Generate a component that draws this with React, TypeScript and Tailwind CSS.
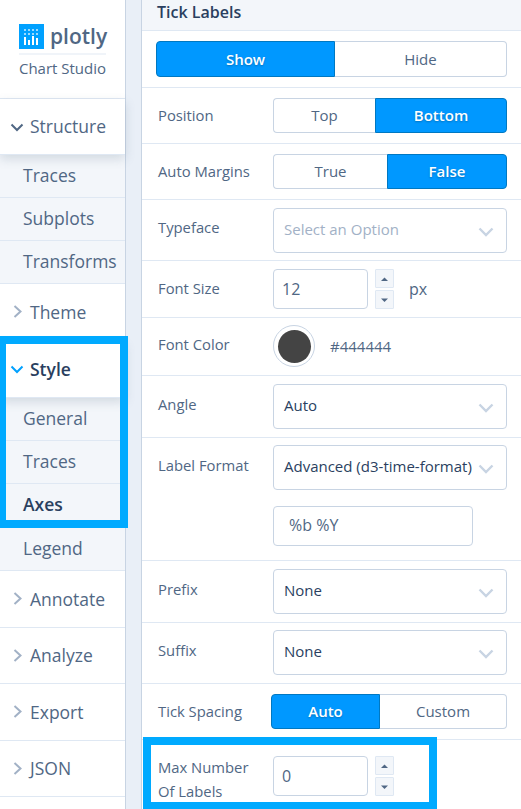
import { ReactNode } from "react";

const font = { fontFamily: '"Open Sans", sans-serif' };

function Chevron({ open, active }: { open?: boolean; active?: boolean }) {
  const color = active ? "#00a1ff" : open ? "#506784" : "#a2b1c6";
  return (
    <svg width="14" height="14" viewBox="0 0 14 14" fill="none" className="shrink-0">
      {open ? (
        <path d="M1.5 4.5 L7 10 L12.5 4.5" stroke={color} strokeWidth="2" />
      ) : (
        <path d="M4.5 1 L10.5 6.5 L4.5 12" stroke={color} strokeWidth="2" />
      )}
    </svg>
  );
}

function SectionHead({ label, h, open, active, shadow }: { label: string; h: string; open?: boolean; active?: boolean; shadow?: boolean }) {
  return (
    <div
      className={`flex items-center gap-[6px] border-b border-[#dfe8f3] bg-white pl-[10px] text-[17.5px] ${h} ${
        shadow ? "relative z-10 shadow-[0_4px_10px_rgba(80,103,132,0.2)]" : ""
      } ${active ? "font-semibold text-[#2a3f5f]" : "text-[#506784]"}`}
    >
      <Chevron open={open} active={active} />
      <span>{label}</span>
    </div>
  );
}

function SubItem({ label, active, h }: { label: string; active?: boolean; h?: string }) {
  return (
    <div
      className={`flex items-center border-b border-[#dfe8f3] bg-[#f3f6fa] pb-[1px] pl-[23px] text-[17.5px] ${h ?? "h-[43px]"} ${
        active ? "font-semibold text-[#2a3f5f]" : "text-[#506784]"
      }`}
    >
      {label}
    </div>
  );
}

function Logo() {
  return (
    <div className="flex h-[99px] flex-col items-center border-b border-[#dfe8f3] bg-white pt-[24px]">
      <div className="flex w-[87px] items-center gap-[6px] border-b-2 border-[#f0f4f9] pb-[4px]">
        <svg width="25" height="25" viewBox="0 0 25 25" className="shrink-0">
          <rect width="25" height="25" fill="#00a1ff" />
          <g fill="#ffffff">
            <rect x="5" y="13" width="2" height="8" />
            <rect x="9" y="16" width="2" height="5" />
            <rect x="13" y="12" width="2" height="9" />
            <rect x="17" y="14" width="2" height="7" />
            <rect x="5" y="5" width="2" height="2" opacity="0.6" />
            <rect x="9" y="5" width="2" height="2" opacity="0.6" />
            <rect x="13" y="5" width="2" height="2" opacity="0.6" />
            <rect x="17" y="5" width="2" height="2" opacity="0.6" />
            <rect x="5" y="9" width="2" height="2" opacity="0.6" />
            <rect x="9" y="9" width="2" height="2" opacity="0.6" />
            <rect x="13" y="9" width="2" height="2" opacity="0.6" />
            <rect x="17" y="9" width="2" height="2" opacity="0.6" />
          </g>
        </svg>
        <span className="text-[21px] font-semibold leading-[25px] text-[#506784]">plotly</span>
      </div>
      <div className="mt-[2px] text-[15px] text-[#506784]">Chart Studio</div>
    </div>
  );
}

function Row({ label, children, className, labelTop }: { label: ReactNode; children: ReactNode; className: string; labelTop: string }) {
  return (
    <div className={`flex border-b border-[#dfe8f3] pl-[16px] ${className}`}>
      <div className={`w-[115px] shrink-0 text-[14.8px] leading-[24px] text-[#506784] ${labelTop}`}>{label}</div>
      <div className="min-w-0 flex-1">{children}</div>
    </div>
  );
}

function Toggle({ left, right, on, leftW, className }: { left: string; right: string; on: "left" | "right"; leftW: string; className?: string }) {
  const onCls = "border-[#0078c2] bg-[#0098ff] font-semibold text-white [text-shadow:0_1px_2px_rgba(0,0,0,0.25)]";
  const offCls = "border-[#c8d4e3] bg-white text-[#506784]";
  return (
    <div className={`flex text-[15px] ${className ?? "h-[35px]"}`}>
      <div
        className={`flex items-center justify-center rounded-l-[4px] border ${leftW} ${on === "left" ? onCls + " " : offCls + " border-r-0"}`}
      >
        {left}
      </div>
      <div
        className={`flex flex-1 items-center justify-center rounded-r-[4px] border ${on === "right" ? onCls : offCls + " border-l-0"}`}
      >
        {right}
      </div>
    </div>
  );
}

function Dropdown({ value, placeholder }: { value: string; placeholder?: boolean }) {
  return (
    <div className="flex h-[45px] w-[234px] items-center justify-between rounded-[4px] border border-[#c8d4e3] bg-white pl-[10px] pr-[12px]">
      <span className={`whitespace-nowrap pb-[2px] text-[15px] ${placeholder ? "text-[#a2b1c6]" : "text-[#2a3f5f]"}`}>{value}</span>
      <svg width="16" height="10" viewBox="0 0 16 10" fill="none" className="-ml-[4px] mt-[2px] shrink-0">
        <path d="M1.5 1.5 L8 8 L14.5 1.5" stroke="#c8d4e3" strokeWidth="2.4" />
      </svg>
    </div>
  );
}

function Stepper() {
  return (
    <div className="flex flex-col gap-[2px]">
      {["M3 7 L6.5 3.5 L10 7 Z", "M3 3.5 L10 3.5 L6.5 7 Z"].map((d) => (
        <div key={d} className="flex h-[19px] w-[19px] items-center justify-center rounded-[1px] border border-[#dfe8f3] bg-[#f3f6fa]">
          <svg width="13" height="10" viewBox="0 0 13 10">
            <path d={d} fill="#506784" />
          </svg>
        </div>
      ))}
    </div>
  );
}

function NumberInput({ value, unit }: { value: string; unit?: string }) {
  return (
    <div className="flex items-center">
      <div className="flex h-[40px] w-[95px] items-center rounded-[4px] border border-[#c8d4e3] bg-white pl-[8px] text-[16px] text-[#506784]">
        {value}
      </div>
      <div className="ml-[7px]">
        <Stepper />
      </div>
      {unit && <span className="ml-[15px] text-[16px] text-[#506784]">{unit}</span>}
    </div>
  );
}

export default function App() {
  return (
    <div className="relative flex h-[809px] w-[521px] overflow-hidden bg-white" style={font}>
      <div className="w-[126px] shrink-0 border-r border-[#c8d4e3] bg-white">
        <Logo />
        <SectionHead label="Structure" h="h-[56px]" open shadow />
        <SubItem label="Traces" />
        <SubItem label="Subplots" />
        <SubItem label="Transforms" />
        <SectionHead label="Theme" h="h-[57px]" />
        <SectionHead label="Style" h="h-[57px]" open active shadow />
        <SubItem label="General" />
        <SubItem label="Traces" />
        <SubItem label="Axes" active />
        <SubItem label="Legend" h="h-[44px]" />
        <SectionHead label="Annotate" h="h-[57px]" />
        <SectionHead label="Analyze" h="h-[56px]" />
        <SectionHead label="Export" h="h-[57px]" />
        <SectionHead label="JSON" h="h-[56px]" />
      </div>
      <div className="w-[16px] shrink-0 border-r border-[#c8d4e3] bg-[#e9eff7]" />
      <div className="min-w-0 flex-1">
        <div className="h-[31px] border-b border-[#dfe8f3] bg-[#f3f6fa] pl-[15px] text-[16px] font-semibold leading-[24px] text-[#2a3f5f]">
          Tick Labels
        </div>
        <div className="h-[57px] border-b border-[#dfe8f3] px-[14px] pt-[10px]">
          <Toggle left="Show" right="Hide" on="left" leftW="w-[179px]" className="h-[36px]" />
        </div>
        <Row label="Position" className="h-[56px] pt-[10px]" labelTop="mt-[5px]">
          <div className="w-[234px]">
            <Toggle left="Top" right="Bottom" on="right" leftW="w-[102px]" />
          </div>
        </Row>
        <Row label="Auto Margins" className="h-[56px] pt-[10px]" labelTop="mt-[5px]">
          <div className="w-[234px]">
            <Toggle left="True" right="False" on="right" leftW="w-[114px]" />
          </div>
        </Row>
        <Row label="Typeface" className="h-[61px] pt-[8px]" labelTop="mt-[7px]">
          <Dropdown value="Select an Option" placeholder />
        </Row>
        <Row label="Font Size" className="h-[57px] pt-[8px]" labelTop="mt-[7px]">
          <NumberInput value="12" unit="px" />
        </Row>
        <Row label="Font Color" className="h-[58px] pt-[7px]" labelTop="mt-[7px]">
          <div className="flex items-center gap-[15px]">
            <div className="flex h-[42px] w-[42px] items-center justify-center rounded-full border border-[#c8d4e3] bg-white">
              <div className="h-[33px] w-[33px] rounded-full bg-[#444444]" />
            </div>
            <span className="text-[15px] text-[#506784]">#444444</span>
          </div>
        </Row>
        <Row label="Angle" className="h-[62px] pt-[8px]" labelTop="mt-[8px]">
          <Dropdown value="Auto" />
        </Row>
        <Row label="Label Format" className="h-[123px] pt-[7px]" labelTop="mt-[8px]">
          <Dropdown value="Advanced (d3-time-format)" />
          <div className="mt-[16px] flex h-[40px] w-[200px] items-center rounded-[4px] border border-[#c8d4e3] pb-[2px] pl-[15px] text-[16px] text-[#506784]">
            %b %Y
          </div>
        </Row>
        <Row label="Prefix" className="h-[62px] pt-[8px]" labelTop="mt-[8px]">
          <Dropdown value="None" />
        </Row>
        <Row label="Suffix" className="h-[61px] pt-[7px]" labelTop="mt-[8px]">
          <Dropdown value="None" />
        </Row>
        <Row label="Tick Spacing" className="h-[56px] pt-[10px]" labelTop="mt-[5px]">
          <div className="-ml-[2px] w-[236px]">
            <Toggle left="Auto" right="Custom" on="left" leftW="w-[109px]" />
          </div>
        </Row>
        <div className="flex items-start pl-[16px] pt-[16px]">
          <div className="-mt-[1px] w-[115px] shrink-0 text-[14.8px] leading-[24px] text-[#506784]">
            Max Number
            <br />
            Of Labels
          </div>
          <NumberInput value="0" />
        </div>
      </div>
      {/* highlight frames drawn over the screenshot */}
      <div className="pointer-events-none absolute left-[-2px] top-[336px] z-20 h-[192px] w-[130px] border-[8px] border-[#00aaff]" />
      <div className="pointer-events-none absolute left-[143px] top-[737px] z-20 h-[73px] w-[294px] border-[8px] border-[#00aaff]" />
    </div>
  );
}
